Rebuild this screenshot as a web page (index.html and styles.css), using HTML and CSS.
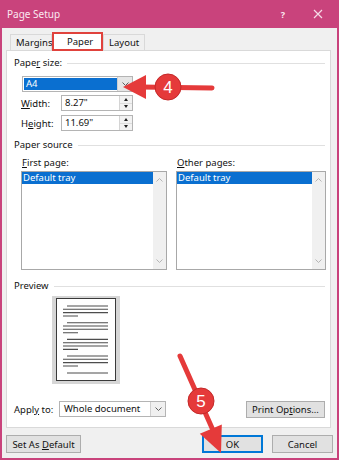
FILE: index.html
```html
<html>

<head>
  <link rel="stylesheet" href="styles.css">
</head>

<body>
  <div class="window">
    <div class="titlebar">
      <span class="title">Page Setup</span>
      <span class="help">?</span>
      <svg class="close" width="10" height="10" viewBox="0 0 10 10">
        <path d="M1 1 L9 9 M9 1 L1 9" stroke="#f6dbe7" stroke-width="1.2" />
      </svg>
    </div>

    <div class="client">
      <div class="tabs">
        <div class="tab">Margins</div>
        <div class="tab active">Paper</div>
        <div class="tab">Layout</div>
      </div>

      <div class="panel">
        <div class="group-head"><span>Pape<u>r</u> size:</span></div>
        <div class="combo paper-size">
          <span class="combo-value selected">A4</span>
          <span class="combo-btn">
            <svg width="7" height="4" viewBox="0 0 7 4"><polyline points="0.5,0.5 3.5,3.5 6.5,0.5" fill="none" stroke="#606060" /></svg>
          </span>
        </div>

        <div class="field-row">
          <label class="field-label"><u>W</u>idth:</label>
          <div class="spin">
            <span class="spin-value">8.27"</span>
            <span class="spin-btns"><i class="up"></i><i class="down"></i></span>
          </div>
        </div>
        <div class="field-row second">
          <label class="field-label">H<u>e</u>ight:</label>
          <div class="spin">
            <span class="spin-value">11.69"</span>
            <span class="spin-btns"><i class="up"></i><i class="down"></i></span>
          </div>
        </div>

        <div class="group-head source-head"><span>Paper source</span></div>
        <div class="sources">
          <div class="list-label"><u>F</u>irst page:</div>
          <div class="list-label"><u>O</u>ther pages:</div>
          <div class="listbox">
            <div class="list-items">
              <div class="list-item selected">Default tray</div>
            </div>
            <div class="scrollbar">
              <svg width="7" height="4" viewBox="0 0 7 4"><polyline points="0.5,3.5 3.5,0.5 6.5,3.5" fill="none" stroke="#b5b5b5" /></svg>
              <svg width="7" height="4" viewBox="0 0 7 4"><polyline points="0.5,0.5 3.5,3.5 6.5,0.5" fill="none" stroke="#b5b5b5" /></svg>
            </div>
          </div>
          <div class="listbox">
            <div class="list-items">
              <div class="list-item selected">Default tray</div>
            </div>
            <div class="scrollbar">
              <svg width="7" height="4" viewBox="0 0 7 4"><polyline points="0.5,3.5 3.5,0.5 6.5,3.5" fill="none" stroke="#b5b5b5" /></svg>
              <svg width="7" height="4" viewBox="0 0 7 4"><polyline points="0.5,0.5 3.5,3.5 6.5,0.5" fill="none" stroke="#b5b5b5" /></svg>
            </div>
          </div>
        </div>

        <div class="group-head preview-head"><span>Preview</span></div>
        <div class="preview">
          <svg class="page" width="60" height="83" viewBox="0 0 60 83">
            <rect x="0.5" y="0.5" width="59" height="82" fill="#fff" stroke="#3a3a3a" />
            <g stroke="#4d4d4d" stroke-width="1.1">
              <path d="M11 8H52 M7 11.3H52 M7 14.6H52 M7 18H22" />
              <path d="M11 24.7H52 M7 28H52 M7 31.3H52 M7 34.7H22" />
              <path d="M11 41.4H52 M7 44.7H52 M7 48H52 M7 51.4H22" />
              <path d="M11 58H52 M7 61.3H52 M7 64.6H52 M7 68H22" />
              <path d="M11 75H52" />
            </g>
          </svg>
        </div>

        <div class="apply-row">
          <label class="apply-label">Appl<u>y</u> to:</label>
          <div class="combo apply">
            <span class="combo-value">Whole document</span>
            <span class="combo-btn">
              <svg width="7" height="4" viewBox="0 0 7 4"><polyline points="0.5,0.5 3.5,3.5 6.5,0.5" fill="none" stroke="#606060" /></svg>
            </span>
          </div>
          <button class="btn print-options">Print Op<u>t</u>ions...</button>
        </div>
      </div>

      <div class="footer">
        <button class="btn set-default">Set As <u>D</u>efault</button>
        <button class="btn ok">OK</button>
        <button class="btn cancel">Cancel</button>
      </div>
    </div>

    <!-- tutorial callouts drawn over the dialog -->
    <svg class="callouts" width="339" height="460" viewBox="0 0 339 460">
      <g fill="#e53a3a">
        <line x1="140" y1="87" x2="212" y2="88" stroke="#e53a3a" stroke-width="5" stroke-linecap="round" />
        <polygon points="123,87 146,75 146,99" />
        <circle cx="168" cy="87" r="13" stroke="#c42828" stroke-width="1" />
        <line x1="180" y1="356" x2="212" y2="428" stroke="#e53a3a" stroke-width="5" stroke-linecap="round" />
        <polygon points="221,453 199.8,433.8 221.8,424.4" />
        <circle cx="201" cy="401" r="13" stroke="#c42828" stroke-width="1" />
      </g>
      <text x="168" y="93" class="callout-num">4</text>
      <text x="201" y="407" class="callout-num">5</text>
    </svg>
  </div>
</body>

</html>
```

FILE: styles.css
```css
body {
  margin: 0;
  background: #ffffff;
  font-family: "Noto Sans", "Open Sans", sans-serif;
  font-size: 9.5px;
  color: #111;
}

.window {
  position: relative;
  width: 339px;
  height: 460px;
  box-sizing: border-box;
  background: #f0f0f0;
  border: 2px solid #c9437c;
  border-top: 0;
  display: flex;
  flex-direction: column;
}

.titlebar {
  height: 28px;
  flex: none;
  margin: 0 -2px;
  background: #c9437c;
  color: #fbe9f1;
  display: flex;
  align-items: center;
  padding-left: 7px;
  font-size: 10px;
}

.title {
  flex: 1;
}

.help {
  width: 12px;
  margin-right: 24px;
  text-align: center;
  font-weight: bold;
  font-size: 9px;
}

.close {
  margin-right: 16px;
}

.client {
  flex: 1;
  padding: 4px 4px 0 4px;
  display: flex;
  flex-direction: column;
}

u {
  text-decoration-thickness: 1px;
  text-underline-offset: 1px;
}

/* tabs */
.tabs {
  display: flex;
  align-items: flex-end;
  height: 18px;
  margin-left: 4px;
  position: relative;
  z-index: 1;
}

.tab {
  height: 16px;
  box-sizing: border-box;
  line-height: 15px;
  padding: 0 4px 0 5px;
  border: 1px solid #d9d9d9;
  border-bottom: 0;
  background: #f0f0f0;
  width: 42px;
}

.tab.active {
  width: 51px;
  height: 19px;
  margin-bottom: -1px;
  line-height: 16px;
  padding-left: 13px;
  background: #fff;
  border: 2px solid #e0423c;
  margin-left: 0;
}

/* panel */
.panel {
  width: 325px;
  box-sizing: border-box;
  border: 1px solid #d9d9d9;
  background: #fff;
  padding: 5px 4px 9px 7px;
}

.group-head {
  height: 14px;
  line-height: 14px;
  display: flex;
  align-items: center;
  padding-right: 1px;
}

.group-head::after {
  content: "";
  flex: 1;
  margin-left: 5px;
  border-top: 1px solid #e0e0e0;
}

.combo {
  height: 16px;
  box-sizing: border-box;
  border: 1px solid #b4b4b4;
  display: flex;
  background: #fff;
}

.combo-value {
  flex: 1;
  line-height: 14px;
  padding-left: 4px;
}

.combo-value.selected {
  background: #0a6fd0;
  color: #fff;
  margin: 1px 0 1px 1px;
  line-height: 12px;
  padding-left: 2px;
}

.combo-btn {
  width: 14px;
  display: flex;
  align-items: center;
  justify-content: center;
  background: #e6e6e6;
  border-left: 1px solid #cfcfcf;
}

.paper-size {
  width: 111px;
  margin: 6px 0 0 8px;
}

.field-row {
  display: flex;
  align-items: center;
  margin-top: 3px;
  height: 16px;
}

.field-row.second {
  margin-top: 4px;
}

.field-label {
  width: 40px;
  margin-left: 7px;
}

.spin {
  width: 72px;
  height: 16px;
  box-sizing: border-box;
  border: 1px solid #b4b4b4;
  display: flex;
}

.spin-value {
  flex: 1;
  padding-left: 3px;
  line-height: 14px;
}

.spin-btns {
  width: 12px;
  display: flex;
  flex-direction: column;
  background: #f2f2f2;
  border-left: 1px solid #d4d4d4;
}

.spin-btns i {
  flex: 1;
  display: flex;
  align-items: center;
  justify-content: center;
}

.spin-btns i::before {
  content: "";
  border-left: 2.5px solid transparent;
  border-right: 2.5px solid transparent;
}

.spin-btns .up::before {
  border-bottom: 3px solid #222;
}

.spin-btns .down {
  border-top: 1px solid #dcdcdc;
}

.spin-btns .down::before {
  border-top: 3px solid #222;
}

.source-head {
  margin-top: 7px;
}

.sources {
  display: grid;
  grid-template-columns: 146px 150px;
  column-gap: 9px;
  margin-left: 7px;
}

.list-label {
  margin-top: 4px;
  height: 14px;
  line-height: 14px;
  padding-left: 1px;
}

.listbox {
  margin-top: 1px;
  height: 99px;
  box-sizing: border-box;
  border: 1px solid #a8a8a8;
  display: flex;
}

.list-items {
  flex: 1;
}

.list-item {
  height: 12px;
  line-height: 12px;
  padding-left: 1px;
}

.list-item.selected {
  background: #0a6fd0;
  color: #fff;
}

.scrollbar {
  width: 13px;
  background: #f0f0f0;
  display: flex;
  flex-direction: column;
  justify-content: space-between;
  align-items: center;
  padding: 6px 0 6px;
}

.preview-head {
  margin-top: 9px;
}

.preview {
  width: 68px;
  height: 88px;
  margin: 3px 0 0 38px;
  background: #d6d6d6;
  display: flex;
  justify-content: center;
  padding-top: 2px;
  box-sizing: border-box;
}

.apply-row {
  display: flex;
  align-items: center;
  margin-top: 16px;
  height: 18px;
}

.apply-label {
  width: 45px;
}

.apply {
  width: 107px;
}

.apply .combo-btn {
  background: #f0f0f0;
}

.btn {
  font-family: inherit;
  font-size: 9.5px;
  color: #111;
  height: 18px;
  box-sizing: border-box;
  padding: 0;
  background: #e1e1e1;
  border: 1px solid #adadad;
}

.print-options {
  width: 79px;
  height: 17px;
  margin-left: auto;
  margin-right: 1px;
}

/* bottom buttons */
.footer {
  display: flex;
  margin-top: 7px;
}

.set-default {
  width: 75px;
}

.ok {
  width: 61px;
  margin-left: auto;
  border-color: #0078d7;
  box-shadow: inset 0 0 0 1px #0078d7;
}

.cancel {
  width: 61px;
  margin-left: 9px;
  margin-right: 0;
}

.callouts {
  position: absolute;
  left: -2px;
  top: 0;
  pointer-events: none;
}

.callout-num {
  fill: #fff;
  font-family: "Liberation Sans", sans-serif;
  font-size: 17px;
  text-anchor: middle;
}
```
